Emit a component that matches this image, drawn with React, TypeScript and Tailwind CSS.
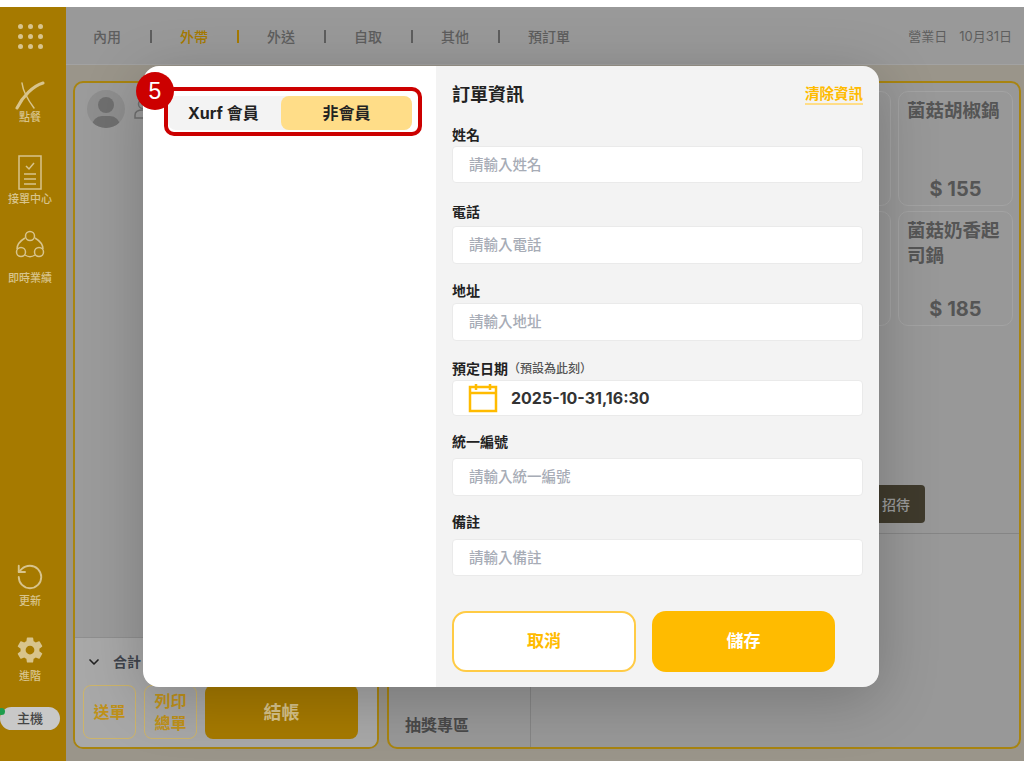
import { ChevronDown, RotateCcw } from 'lucide-react'
import { IoSettingsSharp } from 'react-icons/io5'

const navItems = ['內用', '外帶', '外送', '自取', '其他', '預訂單']

const fields = [
  { label: '姓名', placeholder: '請輸入姓名', labelClass: 'h-[20px]', boxClass: 'h-[37px]' },
  { label: '電話', placeholder: '請輸入電話', labelClass: 'mt-[17px] h-[26px] pt-[3px]', boxClass: 'h-[38px]' },
  { label: '地址', placeholder: '請輸入地址', labelClass: 'mt-[17px] h-[22px] pt-[1px]', boxClass: 'h-[38px]' },
]

const fieldsBelow = [
  { label: '統一編號', placeholder: '請輸入統一編號', labelClass: 'mt-[16px] h-[26px] pt-[1px]', boxClass: 'h-[38px]' },
  { label: '備註', placeholder: '請輸入備註', labelClass: 'mt-[17px] h-[26px]', boxClass: 'h-[37px]' },
]

function Field({ label, placeholder, labelClass, boxClass }: { label: string; placeholder: string; labelClass: string; boxClass: string }) {
  return (
    <>
      <div className={`flex items-start text-[14px] leading-[18px] font-bold text-[#222] ${labelClass}`}>{label}</div>
      <div className={`flex items-center rounded-[4px] border border-[#eaeaea] bg-white pl-[16px] text-[14.5px] font-medium text-[#a7acb6] ${boxClass}`}>
        {placeholder}
      </div>
    </>
  )
}

function SideItem({ icon, label, className }: { icon: React.ReactNode; label: string; className?: string }) {
  return (
    <div className={`flex flex-col items-center text-[11px] leading-[12px] font-medium text-[#d8c48c] ${className ?? ''}`}>
      {icon}
      <span>{label}</span>
    </div>
  )
}

function FoodCard({ name, price }: { name?: string; price?: string }) {
  return (
    <div className="flex h-[115px] w-[115px] flex-col justify-between rounded-[10px] border border-[#a3a3a3] px-[8px] pt-[6px] pb-[4px]">
      <div className="text-[18.5px] leading-[25px] font-bold text-[#555]">{name}</div>
      <div className="text-center text-[20px] leading-[24px] font-bold text-[#555]">{price}</div>
    </div>
  )
}

export default function App() {
  return (
    <div className="relative h-[768px] w-[1024px] overflow-hidden bg-white pt-[7px] font-['Inter','Noto_Sans_CJK_TC',sans-serif]">
      <div className="flex h-[754px]">
        {/* sidebar */}
        <aside className="flex w-[66px] shrink-0 flex-col items-center bg-[#a67a00]">
          <div className="mt-[17px] grid grid-cols-3 gap-x-[5px] gap-y-[5px] pr-[6px]">
            {Array.from({ length: 9 }).map((_, i) => (
              <span key={i} className="h-[5px] w-[5px] rounded-full bg-[#d8c48c]" />
            ))}
          </div>
          <SideItem
            className="mt-[32px] pr-[6px]"
            label="點餐"
            icon={
              <svg width="30" height="30" viewBox="0 0 30 30" fill="none" stroke="#d8c48c" strokeLinecap="round">
                <path d="M28 2C18 5 8 15 2 27" strokeWidth="3" />
                <path d="M7 2c1 8 6 17 12 25" strokeWidth="1.5" />
              </svg>
            }
          />
          <SideItem
            className="mt-[32px] pr-[6px]"
            label="接單中心"
            icon={
              <svg width="26" height="36" viewBox="0 0 26 36" fill="none" stroke="#d8c48c" strokeWidth="1.5" className="mb-[2px]">
                <rect x="2" y="1" width="22" height="33" />
                <path d="M9 11l3 3 5-6M7 19h12M7 24h12M7 29h12" />
              </svg>
            }
          />
          <SideItem
            className="mt-[25px] pr-[6px]"
            label="即時業績"
            icon={
              <svg width="30" height="32" viewBox="0 0 30 32" fill="none" stroke="#d8c48c" strokeWidth="1.5" className="mb-[10px]">
                <circle cx="15" cy="6" r="4.5" />
                <circle cx="6" cy="22" r="4.5" />
                <circle cx="24" cy="22" r="4.5" />
                <path d="M10 8C5 11 2 15 2 19M20 8c5 3 8 7 8 11M10 25c3 2 7 2 10 0" />
              </svg>
            }
          />
          <SideItem
            className="mt-auto pr-[6px]"
            label="更新"
            icon={<RotateCcw size={30} strokeWidth={1.5} color="#d8c48c" className="mb-[3px]" />}
          />
          <SideItem
            className="mt-[29px] pr-[6px]"
            label="進階"
            icon={<IoSettingsSharp size={28} color="#d8c48c" className="mb-[6px]" />}
          />
          <div className="relative mt-[25px] mb-[31px] mr-[6px] flex h-[23px] w-[60px] items-center justify-center rounded-full bg-[#c8c8c8] text-[13px] font-medium text-[#444]">
            主機
            <span className="absolute top-[1px] left-[-2px] h-[7px] w-[7px] rounded-full bg-[#1f9d4d]" />
          </div>
        </aside>

        <div className="flex min-w-0 flex-1 flex-col">
          {/* top bar */}
          <header className="flex h-[58px] shrink-0 items-center border-b border-[#a2a2a2] bg-[#999] pt-[2px] pr-[12px] pl-[27px]">
            {navItems.map((item, i) => (
              <div key={item} className="flex items-center">
                {i > 0 && <span className={`mx-[28.5px] h-[13px] w-[2px] ${i === 2 ? 'bg-[#a67a00]' : 'bg-[#5e5e5e]'}`} />}
                <span className={`text-[14px] font-medium ${item === '外帶' ? 'text-[#a67a00]' : 'text-[#5e5e5e]'}`}>{item}</span>
              </div>
            ))}
            <div className="ml-auto flex gap-[12px] text-[13px] text-[#5e5e5e]">
              <span>營業日</span>
              <span>10月31日</span>
            </div>
          </header>

          {/* body */}
          <div className="flex flex-1 gap-[8px] bg-[#9a958a] pt-[16px] pr-[3px] pb-[12px] pl-[7px]">
            <section className="flex w-[306px] flex-col overflow-hidden rounded-[10px] border-2 border-[#a88410] bg-[#9b9b9b]">
              <div className="flex flex-1 items-start gap-[8px] px-[12px] pt-[7px]">
                <div className="relative h-[38px] w-[38px] overflow-hidden rounded-full bg-[#8e8e8e]">
                  <span className="absolute top-[7px] left-[11px] h-[16px] w-[16px] rounded-full bg-[#6f6f6f]" />
                  <span className="absolute top-[26px] left-[5px] h-[20px] w-[28px] rounded-full bg-[#6f6f6f]" />
                </div>
                <svg width="20" height="22" viewBox="0 0 20 22" fill="none" stroke="#6f6f6f" strokeWidth="1.5" className="mt-[8px]">
                  <circle cx="10" cy="6" r="4.5" />
                  <path d="M2 20v-3c0-3 3-5 8-5s8 2 8 5v3z" />
                </svg>
              </div>
              <div className="h-[110px] border-t border-[#8f8f8f] bg-[#a8a8a8] pr-[19px] pl-[8px]">
                <div className="flex h-[47px] items-center gap-[11px] pl-[3px] text-[14px] font-bold text-[#3f444d]">
                  <ChevronDown size={16} strokeWidth={2.5} className="text-[#222]" />
                  合計
                </div>
                <div className="flex gap-[8px]">
                  <div className="flex h-[54px] w-[53px] items-center justify-center rounded-[8px] border border-[#cdb46a] text-[16px] font-bold text-[#c0921a]">送單</div>
                  <div className="flex h-[54px] w-[53px] items-center justify-center rounded-[8px] border border-[#cdb46a] text-center text-[16px] leading-[22px] font-bold text-[#c0921a]">列印<br />總單</div>
                  <div className="flex h-[54px] flex-1 items-center justify-center rounded-[8px] bg-[#a67a00] text-[18px] font-bold text-[#d8c48c]">結帳</div>
                </div>
              </div>
            </section>

            <section className="flex flex-1 flex-col rounded-[10px] border-2 border-[#a88410] bg-[#989898]">
              <div className="flex h-[451px] shrink-0 flex-col border-b border-[#858585]">
                <div className="flex justify-end gap-[7px] pt-[8px] pr-[6px]">
                  <div className="flex flex-col gap-[5px]">
                    <FoodCard />
                    <FoodCard />
                  </div>
                  <div className="flex flex-col gap-[5px]">
                    <FoodCard name="菌菇胡椒鍋" price="$ 155" />
                    <FoodCard name="菌菇奶香起司鍋" price="$ 185" />
                  </div>
                </div>
                <div className="mt-auto mb-[10px] flex justify-end pr-[94px]">
                  <div className="flex h-[38px] w-[60px] items-center justify-end rounded-[4px] bg-[#3f3a2c] pr-[15px] text-[14px] font-medium text-[#9a9a9a]">招待</div>
                </div>
              </div>
              <div className="flex flex-1">
                <div className="flex w-[142px] flex-col justify-end border-r border-[#858585] pb-[10px] pl-[16px] text-[16px] font-bold text-[#4a4a4a]">抽獎專區</div>
              </div>
            </section>
          </div>
        </div>
      </div>

      {/* order info dialog */}
      <div className="absolute top-[66px] left-[143px] flex h-[621px] w-[736px] overflow-hidden rounded-[16px] shadow-[0_12px_60px_rgba(0,0,0,0.22)]">
        <div className="w-[293px] bg-white pt-[30px] pr-[24px] pl-[25px]">
          <div className="flex h-[34px] items-center rounded-[8px] bg-[#f3f3f3]">
            <span className="flex-1 pl-[20px] text-[16px] font-bold whitespace-nowrap text-[#222]">Xurf 會員</span>
            <span className="flex h-[34px] w-[131px] items-center justify-center rounded-[8px] bg-[#ffdd88] text-[16px] font-bold text-[#222]">非會員</span>
          </div>
        </div>
        <div className="flex-1 bg-[#f3f3f3] pt-[16px] pr-[16px] pl-[16px]">
          <div className="flex h-[24px] items-center justify-between">
            <h2 className="text-[18px] font-bold text-[#222]">訂單資訊</h2>
            <span className="border-b-2 border-[#ffdd88] text-[14.5px] leading-[19px] font-bold text-[#ffbb00]">清除資訊</span>
          </div>
          <div className="mt-[20px] flex flex-col">
            {fields.map((f) => (
              <Field key={f.label} {...f} />
            ))}
            <div className="mt-[17px] flex h-[22px] items-start pt-[2px] text-[14px] leading-[18px] font-bold text-[#222]">
              預定日期
              <span className="text-[12px] font-medium text-[#555]">（預設為此刻）</span>
            </div>
            <div className="flex h-[36px] items-center gap-[13px] rounded-[4px] border border-[#eaeaea] bg-white pl-[15px] text-[16px] font-bold text-[#333]">
              <svg width="30" height="30" viewBox="0 0 30 30" fill="none" stroke="#ffbb00" strokeWidth="2.5">
                <rect x="2" y="4" width="26" height="24" />
                <path d="M2 10h26M8 1v6M22 1v6" />
              </svg>
              2025-10-31,16:30
            </div>
            {fieldsBelow.map((f) => (
              <Field key={f.label} {...f} />
            ))}
          </div>
          <div className="mt-[35px] flex gap-[16px]">
            <div className="flex h-[61px] w-[184px] items-center justify-center rounded-[14px] border-2 border-[#ffcb45] bg-white text-[17px] font-bold text-[#ffbb00]">取消</div>
            <div className="flex h-[61px] w-[183px] items-center justify-center rounded-[14px] bg-[#ffbb00] text-[17px] font-bold text-white">儲存</div>
          </div>
        </div>
      </div>

      {/* tutorial callout */}
      <div className="absolute top-[87px] left-[164px] h-[49px] w-[258px] rounded-[10px] border-[4px] border-[#cc0000]" />
      <div className="absolute top-[72px] left-[136px] flex h-[38px] w-[38px] items-center justify-center rounded-full bg-[#cc0000] font-['Liberation_Sans',sans-serif] text-[23px] text-white">5</div>
    </div>
  )
}
